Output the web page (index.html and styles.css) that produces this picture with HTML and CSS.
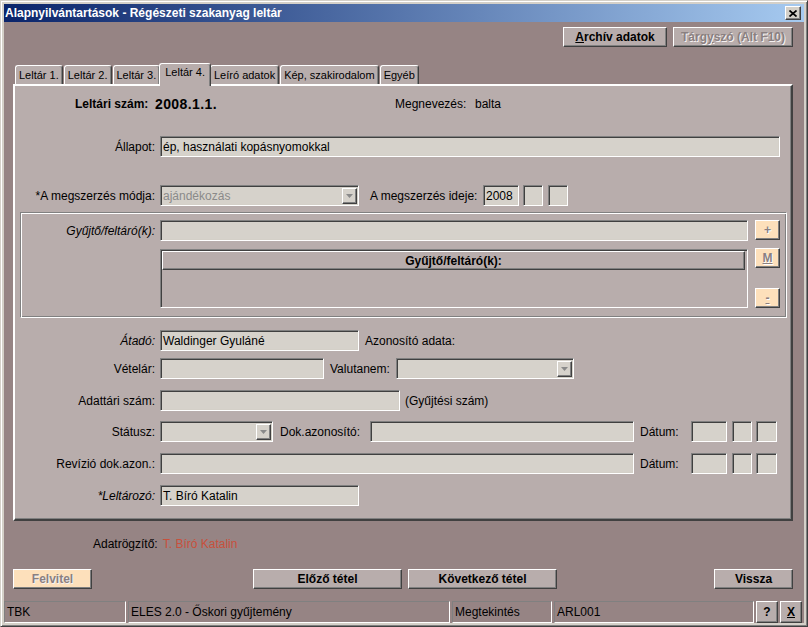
FILE: index.html
```html
<!DOCTYPE html>
<html lang="hu">
<head>
<meta charset="utf-8">
<title>Alapnyilvántartások - Régészeti szakanyag leltár</title>
<link rel="stylesheet" href="styles.css">
</head>
<body>
<div class="window">
  <div class="titlebar">
    <span class="title">Alapnyilvántartások - Régészeti szakanyag leltár</span>
    <span class="close"><svg width="8" height="7" viewBox="0 0 8 7"><path d="M0.5 0.5L7.5 6.5M7.5 0.5L0.5 6.5" stroke="#000" stroke-width="1.7" fill="none"/></svg></span>
  </div>
  <div class="content">
    <div class="topbar">
      <div class="btn bold w-archiv"><span><u>A</u>rchív adatok</span></div>
      <div class="btn bold disabled w-targy"><span>Tárg<u>y</u>szó (Alt F10)</span></div>
    </div>
    <div class="tabs">
      <div class="tab">Leltár 1.</div>
      <div class="tab">Leltár 2.</div>
      <div class="tab">Leltár 3.</div>
      <div class="tab active">Leltár 4.</div>
      <div class="tab">Leíró adatok</div>
      <div class="tab">Kép, szakirodalom</div>
      <div class="tab">Egyéb</div>
    </div>
    <div class="panel">
      <div class="row head">
        <span class="bold lsz">Leltári szám:</span>
        <span class="bold num">2008.1.1.</span>
        <span class="megn">Megnevezés:</span>
        <span>balta</span>
      </div>
      <div class="row mt24">
        <span class="lbl">Állapot:</span>
        <div class="field w620">ép, használati kopásnyomokkal</div>
      </div>
      <div class="row mt28">
        <span class="lbl">*A megszerzés módja:</span>
        <div class="field select w199"><span class="val grey">ajándékozás</span><span class="arrow"><svg width="7" height="4" viewBox="0 0 7 4"><path d="M0 0H7L3.5 4Z" fill="#8a8a8a"/></svg></span></div>
        <span class="ideje">A megszerzés ideje:</span>
        <div class="field w36">2008</div>
        <div class="field w20 ml4"></div>
        <div class="field w20 ml5"></div>
      </div>
      <div class="group">
        <div class="glbl"><span class="it">Gyűjtő/feltáró(k):</span></div>
        <div class="gfields">
          <div class="field gin"></div>
          <div class="list">
            <div class="lhead bold">Gyűjtő/feltáró(k):</div>
          </div>
        </div>
        <div class="gbtns">
          <div class="sbtn bold">+</div>
          <div class="sbtn bold mt8"><u>M</u></div>
          <div class="sbtn bold mt20"><u>-</u></div>
        </div>
      </div>
      <div class="row mt12">
        <span class="lbl it">Átadó:</span>
        <div class="field w199">Waldinger Gyuláné</div>
        <span class="ml6">Azonosító adata:</span>
      </div>
      <div class="row mt7">
        <span class="lbl">Vételár:</span>
        <div class="field w164"></div>
        <span class="valuta">Valutanem:</span>
        <div class="field select w178"><span class="val"></span><span class="arrow"><svg width="7" height="4" viewBox="0 0 7 4"><path d="M0 0H7L3.5 4Z" fill="#8a8a8a"/></svg></span></div>
      </div>
      <div class="row mt11">
        <span class="lbl">Adattári szám:</span>
        <div class="field w240"></div>
        <span class="ml5">(Gyűjtési szám)</span>
      </div>
      <div class="row mt10">
        <span class="lbl">Státusz:</span>
        <div class="field select w113"><span class="val"></span><span class="arrow"><svg width="7" height="4" viewBox="0 0 7 4"><path d="M0 0H7L3.5 4Z" fill="#8a8a8a"/></svg></span></div>
        <span class="dokaz">Dok.azonosító:</span>
        <div class="field w264"></div>
        <span class="datum">Dátum:</span>
        <div class="field w36"></div>
        <div class="field w20 ml5"></div>
        <div class="field w21 ml4"></div>
      </div>
      <div class="row mt11">
        <span class="lbl">Revízió dok.azon.:</span>
        <div class="field w474"></div>
        <span class="datum">Dátum:</span>
        <div class="field w36"></div>
        <div class="field w20 ml5"></div>
        <div class="field w21 ml4"></div>
      </div>
      <div class="row mt11">
        <span class="lbl it">*Leltározó:</span>
        <div class="field w199">T. Bíró Katalin</div>
      </div>
    </div>
    <div class="recorder">
      <span>Adatrögzítő:</span>
      <span class="red">T. Bíró Katalin</span>
    </div>
    <div class="actions">
      <div class="btn bold peach disabled felvitel">Felvitel</div>
      <div class="btn bold prev">Előző tétel</div>
      <div class="btn bold next">Következő tétel</div>
      <div class="btn bold vissza">Vissza</div>
    </div>
  </div>
  <div class="statusbar">
    <div class="sp w-tbk">TBK</div>
    <div class="sp w-eles">ELES 2.0 - Őskori gyűjtemény</div>
    <div class="sp w-megt">Megtekintés</div>
    <div class="sp w-arl">ARL001</div>
    <div class="btn bold sbt">?</div>
    <div class="btn bold sbt"><u>X</u></div>
  </div>
</div>
</body>
</html>
```
FILE: styles.css
```css
* { box-sizing: border-box; }
html, body { margin: 0; padding: 0; }
body {
  width: 808px; height: 627px; overflow: hidden;
  background: #d4d0c8;
  font-family: "Liberation Sans", Arial, sans-serif;
  font-size: 12px; color: #000;
}
.window {
  width: 808px; height: 627px;
  display: flex; flex-direction: column;
  border: 1px solid; border-color: #d4d0c8 #404040 #404040 #d4d0c8;
  padding: 3px;
  background: #d4d0c8;
  box-shadow: inset 1px 1px #fff, inset -1px -1px #808080;
}
.titlebar {
  flex: none; height: 18px;
  display: flex; align-items: center; justify-content: space-between;
  padding: 0 3px 0 1px;
  background: linear-gradient(to right, #0a246a, #a6caf0);
}
.title { color: #fff; font-weight: bold; font-size: 12px; }
.close {
  width: 16px; height: 14px;
  background: #d4d0c8;
  border: 1px solid; border-color: #fff #404040 #404040 #fff;
  box-shadow: inset -1px -1px #808080;
  display: flex; align-items: center; justify-content: center;
}
.content {
  flex: 1; display: flex; flex-direction: column;
  background: #968484;
  padding: 5px 11px 0 9px;
}
.topbar { display: flex; justify-content: flex-end; gap: 6px; height: 20px; }
.btn {
  height: 20px; flex: none;
  background: #b8adac;
  border: 1px solid; border-color: #fff #404040 #404040 #fff;
  box-shadow: inset -1px -1px #808080;
  display: flex; align-items: center; justify-content: center;
  white-space: nowrap;
}
.bold { font-weight: bold; }
.it { font-style: italic; }
.grey { color: #8a8a8a; }
.disabled { color: #8a8080; text-shadow: 1px 1px 0 #f6f2f2; }
.peach { background: #fde0bb; }
.w-archiv { width: 104px; }
.w-targy { width: 120px; }

.tabs {
  display: flex; align-items: flex-end;
  height: 21px; margin-top: 16px; padding-left: 2px;
  position: relative; z-index: 1;
}
.tab {
  height: 19px; margin-right: 1px;
  padding: 2px 3px 0;
  font-size: 11px;
  line-height: 15px;
  background: #b8adac;
  border: 1px solid; border-bottom: none;
  border-color: #fff #404040 #404040 #fff;
  border-radius: 3px 3px 0 0;
  box-shadow: inset -1px 0 #808080;
  white-space: nowrap;
}
.tab.active {
  height: 23px; margin: 0 -1px -2px -2px;
  padding: 1px 5px 0;
  position: relative;
}
.panel {
  height: 437px;
  background: #b8adac;
  border: 2px solid; border-color: #fff #404040 #404040 #fff;
  box-shadow: inset -1px -1px #808080;
}
.row { display: flex; align-items: center; height: 21px; }
.row.head { height: 16px; margin-top: 10px; padding-left: 60px; }
.lsz { width: 80px; }
.num { width: 240px; font-size: 14px; letter-spacing: 0.4px; }
.megn { width: 80px; }
.lbl { width: 140px; text-align: right; margin-right: 5px; flex: none; white-space: nowrap; }

.field {
  height: 21px; flex: none;
  background: #d6d2cb;
  border: 1px solid; border-color: #808080 #fff #fff #808080;
  box-shadow: inset 1px 1px #404040, inset -1px -1px #d4d0c8;
  padding: 0 2px;
  display: flex; align-items: center;
  white-space: nowrap; overflow: hidden;
}
.select { padding: 1px 1px 1px 2px; }
.select .val { flex: 1; }
.arrow {
  width: 15px; height: 16px; margin-top: 1px;
  background: #d6d2cb;
  border: 1px solid; border-color: #fff #404040 #404040 #fff;
  box-shadow: inset -1px -1px #808080;
  display: flex; align-items: center; justify-content: center;
}
.w620 { width: 620px; }
.w199 { width: 199px; }
.w178 { width: 178px; }
.w164 { width: 164px; }
.w240 { width: 240px; }
.w113 { width: 113px; }
.w264 { width: 264px; }
.w474 { width: 474px; }
.w36 { width: 36px; }
.w20 { width: 20px; }
.w21 { width: 21px; }
.ml4 { margin-left: 4px; }
.ml5 { margin-left: 5px; }
.ml6 { margin-left: 6px; }
.mt7 { margin-top: 7px; }
.mt8 { margin-top: 8px; }
.mt10 { margin-top: 10px; }
.mt11 { margin-top: 11px; }
.mt12 { margin-top: 12px; }
.mt20 { margin-top: 20px; }
.mt24 { margin-top: 24px; }
.mt28 { margin-top: 28px; }
.ideje { margin-left: 11px; width: 113px; white-space: nowrap; }
.valuta { margin-left: 6px; width: 66px; }
.dokaz { margin-left: 7px; width: 90px; }
.datum { margin-left: 6px; width: 51px; }

.group {
  display: flex;
  height: 106px;
  margin: 6px 4px 0 5px;
  padding: 7px 6px 0 0;
  border: 1px solid; border-color: #808080 #fff #fff #808080;
  box-shadow: inset 1px 1px #fff, inset -1px -1px #808080;
}
.glbl {
  width: 134px; height: 21px; margin-right: 5px; flex: none;
  display: flex; align-items: center; justify-content: flex-end;
}
.gfields { width: 588px; flex: none; margin-right: 7px; }
.gin { width: 588px; }
.list {
  margin-top: 8px; height: 59px;
  background: #b8adac;
  border: 1px solid; border-color: #808080 #fff #fff #808080;
  box-shadow: inset 1px 1px #404040;
  padding: 1px 2px 0 1px;
}
.lhead {
  height: 19px;
  background: #b8adac;
  border: 1px solid; border-color: #fff #404040 #404040 #fff;
  box-shadow: inset -1px -1px #808080;
  display: flex; align-items: center; justify-content: center;
}
.gbtns { width: 25px; flex: none; display: flex; flex-direction: column; }
.sbtn {
  height: 20px;
  background: #fde0bb;
  border: 1px solid; border-color: #fff #404040 #404040 #fff;
  box-shadow: inset -1px -1px #808080;
  display: flex; align-items: center; justify-content: center;
  color: #8a8080; text-shadow: 1px 1px 0 #fff;
}

.recorder { display: flex; align-items: center; height: 14px; margin-top: 16px; padding-left: 80px; }
.red { color: #c8503c; margin-left: 5px; }
.actions { display: flex; height: 20px; margin-top: 18px; }
.felvitel { width: 79px; }
.prev { width: 149px; margin-left: 161px; }
.next { width: 149px; margin-left: 6px; }
.vissza { width: 79px; margin-left: auto; }

.statusbar {
  flex: none; height: 23px;
  display: flex; gap: 2px;
  background: #968484;
  padding-top: 1px;
}
.sp {
  height: 22px;
  border: 1px solid; border-color: #808080 #fff #fff #808080;
  padding-left: 2px;
  display: flex; align-items: center;
  white-space: nowrap; overflow: hidden;
}
.w-tbk { width: 122px; }
.w-eles { width: 322px; }
.w-megt { width: 100px; }
.w-arl { width: 200px; }
.sbt { width: 22px; height: 22px; }
```
